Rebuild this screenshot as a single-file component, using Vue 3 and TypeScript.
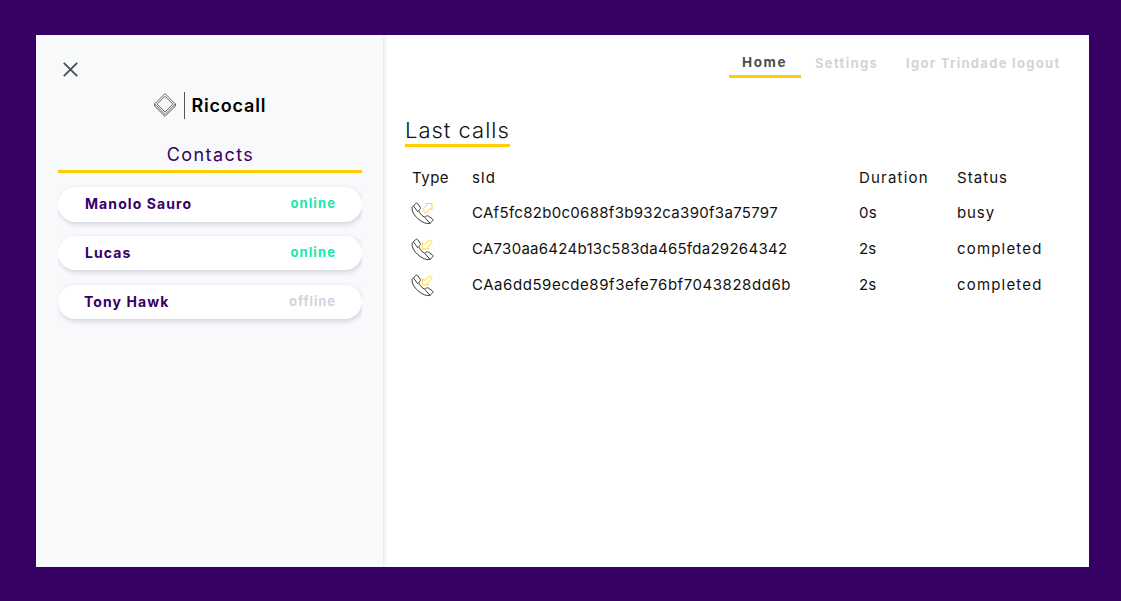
<script setup lang="ts">
interface Contact { name: string; status: 'online' | 'offline'; key: string }
interface Call { sid: string; duration: string; status: string; outgoing: boolean; key: string }

const contacts: Contact[] = [
  { name: 'Manolo Sauro', status: 'online', key: 'manolo' },
  { name: 'Lucas', status: 'online', key: 'lucas' },
  { name: 'Tony Hawk', status: 'offline', key: 'tony' },
]

const calls: Call[] = [
  { sid: 'CAf5fc82b0c0688f3b932ca390f3a75797', duration: '0s', status: 'busy', outgoing: true, key: 'first' },
  { sid: 'CA730aa6424b13c583da465fda29264342', duration: '2s', status: 'completed', outgoing: false, key: 'second' },
  { sid: 'CAa6dd59ecde89f3efe76bf7043828dd6b', duration: '2s', status: 'completed', outgoing: false, key: 'third' },
]
</script>

<template>
  <div class="page">
    <div class="frame">
      <aside class="sidebar">
        <svg class="close" width="15" height="15" viewBox="0 0 15 15"><path d="M.8.8 14.2 14.2M14.2.8.8 14.2" /></svg>
        <div class="brand">
          <svg class="logo" width="22" height="24" viewBox="0 0 22 24">
            <path d="M11 .6 21.4 11v2L11 23.4.6 13v-2zM.6 11 11 21.4 21.4 11M11 3.2 18.900 11.100 11 19 3.100 11.100z" />
          </svg>
          <span class="divider"></span>
          <span class="brand-name">Ricocall</span>
        </div>
        <h2 class="contacts-title">Contacts</h2>
        <div class="contacts">
          <div v-for="c in contacts" :key="c.key" class="contact" :class="c.key">
            <span class="name">{{ c.name }}</span>
            <span class="state" :class="c.status">{{ c.status }}</span>
          </div>
        </div>
      </aside>
      <main class="main">
        <nav class="nav">
          <a class="home">Home</a>
          <a class="settings">Settings</a>
          <a class="logout">Igor Trindade logout</a>
        </nav>
        <h1 class="title">Last calls</h1>
        <div class="calls">
          <div class="row head">
            <span class="type">Type</span>
            <span class="sid">sId</span>
            <span class="duration">Duration</span>
            <span class="status">Status</span>
          </div>
          <div v-for="c in calls" :key="c.key" class="row" :class="c.key">
            <span class="icon-cell">
              <svg width="23" height="23" viewBox="0 0 24 24">
                <path class="phone" d="M1.200 5.500 4.600 1.800c.8-.8 1.700-.8 2.400 0l2.600 3.700c.5.800.4 1.400-.2 2L8 8.800c.8 2.900 3.700 6 6.600 7.200l1.500-1.300c.7-.5 1.300-.5 2 0l4.200 2.900c.9.7.9 1.500.2 2.200l-2.600 2.500C13 24.500-.5 13 1.200 5.500zM2.700 4.200l4.500 6.200M19.700 22l-5-5.500" />
                <path v-if="c.outgoing" class="arrow" d="m12 8 5-5.200-1.600-1.300h6.500v6.700l-1.700-1.500-5 5z" />
                <path v-else class="arrow" d="m19.500 1.800 2.800 2.700-5.400 5.200 1.700 1.700h-6.500V5l1.800 1.800z" />
              </svg>
            </span>
            <span class="sid">{{ c.sid }}</span>
            <span class="duration">{{ c.duration }}</span>
            <span class="status">{{ c.status }}</span>
          </div>
        </div>
      </main>
    </div>
  </div>
</template>

<style scoped>
.page { height: 601px; box-sizing: border-box; padding: 35px 32px 34px 36px; background: #360064; font-family: Inter, "Noto Sans", sans-serif; color: #111; }
.frame { display: flex; height: 532px; background: #fff; }
.sidebar { width: 347px; box-sizing: border-box; padding: 27px 21px 0 22px; background: #f8f9fb; box-shadow: 1px 0 5px rgba(0, 0, 0, .13); clip-path: inset(0 -12px 0 0); }
.close { display: block; margin-left: 5px; fill: none; stroke: #455050; stroke-width: 1.8; }
.brand { display: flex; align-items: center; margin: 15px 0 0 95.500px; height: 28px; }
.logo { margin-bottom: 2px; fill: none; stroke: #222; stroke-width: .7; }
.divider { width: 1px; height: 27px; margin: 0 7px 1px 8px; background: #555; }
.brand-name { font-size: 18px; line-height: 26px; font-weight: 600; letter-spacing: .8px; color: #000; }
.contacts-title { margin: 0; height: 53px; box-sizing: border-box; padding: 18px 0 0 1px; border-bottom: 3px solid #fecf00; font-size: 18px; line-height: 34px; font-weight: 400; letter-spacing: 1.400px; text-align: center; color: #360067; }
.contacts { height: 160px; overflow: hidden; padding-top: 14px; }
.contact { display: flex; justify-content: space-between; box-sizing: border-box; height: 34px; margin-bottom: 15px; padding: 0 26px 0 27px; border-radius: 17px; background: #fff; box-shadow: 1px 2px 5px rgba(50, 50, 93, .2); font-weight: 700; line-height: 34px; }
.manolo { height: 35px; margin-bottom: 14px; border-radius: 17.500px; }
.name { font-size: 14px; letter-spacing: 1.080px; color: #360067; }
.tony .name { margin-left: -1px; }
.state { font-size: 13px; line-height: 32px; letter-spacing: 1.100px; }
.online { color: #14eab0; }
.offline { color: #d2d3dc; letter-spacing: .9px; }
.main { flex: 1; padding-left: 22px; }
.nav { display: flex; height: 43px; font-size: 13px; font-weight: 700; line-height: 56px; white-space: nowrap; color: #d2d3dc; }
.home { width: 72px; margin-left: 324px; box-sizing: border-box; padding-left: 13px; border-bottom: 3px solid #fecf00; font-size: 13.500px; line-height: 55px; letter-spacing: 1.600px; color: #455050; }
.settings { width: 63px; margin-left: 14px; letter-spacing: 1.350px; }
.logout { margin-left: 28px; letter-spacing: 1.300px; }
.title { width: 105px; height: 28px; margin: 38px 0 0; border-bottom: 3px solid #fecf00; font-size: 22px; font-weight: 300; line-height: 29px; letter-spacing: 1px; white-space: nowrap; }
.calls { padding: 14px 0 0 7px; font-size: 15px; }
.row { display: grid; grid-template-columns: 60px 387px 98px 120px; height: 36px; line-height: 34px; }
.head { height: 35px; }
.type { letter-spacing: .5px; }
.head .sid { letter-spacing: .9px; }
.head .duration { letter-spacing: 1.200px; }
.head .status { letter-spacing: 1.050px; }
.duration { letter-spacing: .2px; }
.status { letter-spacing: 1.180px; }
.first .status { letter-spacing: .9px; }
.first .sid { letter-spacing: .3px; }
.second .sid { letter-spacing: .28px; }
.third .sid { letter-spacing: .55px; }
.icon-cell { display: flex; align-items: center; height: 34px; }
.icon-cell svg { margin-left: -1px; }
.phone, .arrow { fill: none; stroke: #333; stroke-width: 1; }
.arrow { stroke: #fecf3c; }
</style>
